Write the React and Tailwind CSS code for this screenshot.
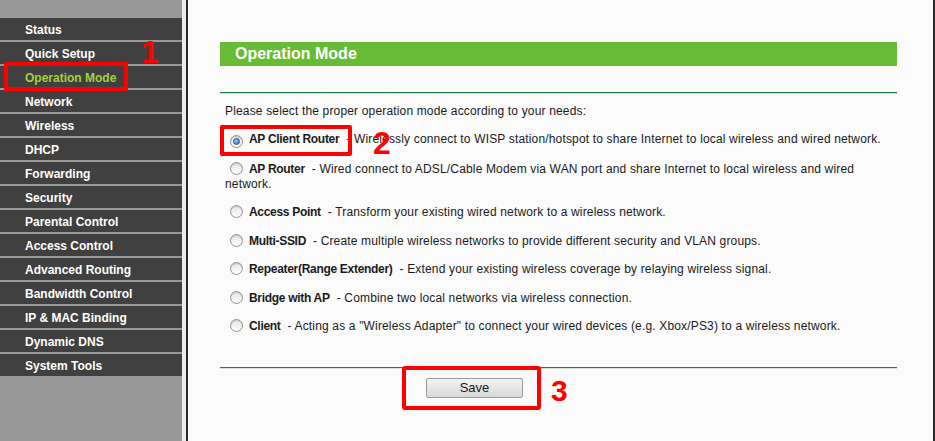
import React from 'react';

const menu = [
  'Status',
  'Quick Setup',
  'Operation Mode',
  'Network',
  'Wireless',
  'DHCP',
  'Forwarding',
  'Security',
  'Parental Control',
  'Access Control',
  'Advanced Routing',
  'Bandwidth Control',
  'IP & MAC Binding',
  'Dynamic DNS',
  'System Tools',
];

const modes = [
  { label: 'AP Client Router', desc: 'Wirelessly connect to WISP station/hotspot to share Internet to local wireless and wired network.', checked: true },
  { label: 'AP Router', desc: 'Wired connect to ADSL/Cable Modem via WAN port and share Internet to local wireless and wired network.' },
  { label: 'Access Point', desc: 'Transform your existing wired network to a wireless network.' },
  { label: 'Multi-SSID', desc: 'Create multiple wireless networks to provide different security and VLAN groups.' },
  { label: 'Repeater(Range Extender)', desc: 'Extend your existing wireless coverage by relaying wireless signal.' },
  { label: 'Bridge with AP', desc: 'Combine two local networks via wireless connection.' },
  { label: 'Client', desc: 'Acting as a "Wireless Adapter" to connect your wired devices (e.g. Xbox/PS3) to a wireless network.' },
];

const Radio = ({ checked }) => (
  <span className="inline-flex items-center justify-center w-[13px] h-[13px] ml-[5px] mr-[6px] align-[-2px] rounded-full border border-[#939393] bg-gradient-to-b from-[#e6e6e6] to-[#fdfdfd] shadow-[inset_0_1px_1px_rgba(0,0,0,0.15)]">
    {checked && (
      <span className="w-[7px] h-[7px] rounded-full bg-[radial-gradient(circle_at_40%_35%,#8fd0ff,#1f6fb8)] border border-[#2b4f70]" />
    )}
  </span>
);

export default function App() {
  return (
    <div className="relative flex w-[935px] h-[441px] overflow-hidden bg-[#fbfbfb] font-['Liberation_Sans',Arial,sans-serif]">
      {/* sidebar */}
      <div className="w-[182px] shrink-0 bg-[#999999] pt-[18px]">
        {menu.map(item => (
          <div
            key={item}
            className={`h-[22px] mb-[2px] bg-[#404040] pl-[25px] pt-[1px] flex items-center text-[12px] font-bold ${
              item === 'Operation Mode' ? 'text-[#a2d13c]' : 'text-white'
            }`}
          >
            {item}
          </div>
        ))}
      </div>
      <div className="w-[4px] shrink-0 bg-[#ededed]" />

      {/* main content */}
      <div className="flex-1 border-l-2 border-r-2 border-[#2a2a2a] pl-[32px] pt-[42px]">
        <div className="w-[677px]">
          <div className="h-[24px] bg-[#68bb34] pl-[15px] flex items-center text-white text-[16px] font-bold">
            Operation Mode
          </div>
          <div className="mt-[26px] h-px bg-[#217a40]" />
          <div className="h-px bg-[#d3e0d3]" />

          <div className="pl-[5px] pr-[4px] pt-[10px] text-[12px] leading-[15px] tracking-[0.16px] text-[#1a1a1a]">
            <div>Please select the proper operation mode according to your needs:</div>
            <div className="mt-[13px] flex flex-col gap-[13.5px]">
              {modes.map(m => (
                <div key={m.label}>
                  <Radio checked={m.checked} />
                  <span className="font-bold tracking-[-0.3px]">{m.label}</span>
                  <span>&nbsp;&nbsp;- {m.desc}</span>
                </div>
              ))}
            </div>
          </div>

          <div className="mt-[33px] h-px bg-[#217a40]" />
          <div className="h-px bg-[#d3e0d3]" />

          <button className="mt-[9px] ml-[206px] w-[97px] h-[20px] rounded-[2px] border border-[#9a9a9a] bg-gradient-to-b from-[#f4f4f4] to-[#d9d9d9] text-[13px] text-[#1a1a1a] leading-[18px]">
            Save
          </button>
        </div>
      </div>

      {/* red annotations */}
      <div className="absolute left-[4px] top-[62px] w-[124px] h-[29px] border-[4px] border-[#ff0000] rounded-[2px]" />
      <div className="absolute left-[141px] top-[36px] text-[32px] leading-[32px] font-bold text-[#ff0000]">1</div>

      <div className="absolute left-[220px] top-[125px] w-[132px] h-[31px] border-[4px] border-[#ff0000] rounded-[2px]" />
      <div className="absolute left-[373px] top-[127px] text-[32px] leading-[32px] font-bold text-[#ff0000]">2</div>

      <div className="absolute left-[402px] top-[366px] w-[139px] h-[44px] border-[4px] border-[#ff0000] rounded-[3px]" />
      <div className="absolute left-[551px] top-[376px] text-[30px] leading-[30px] font-bold text-[#ff0000]">3</div>
    </div>
  );
}
